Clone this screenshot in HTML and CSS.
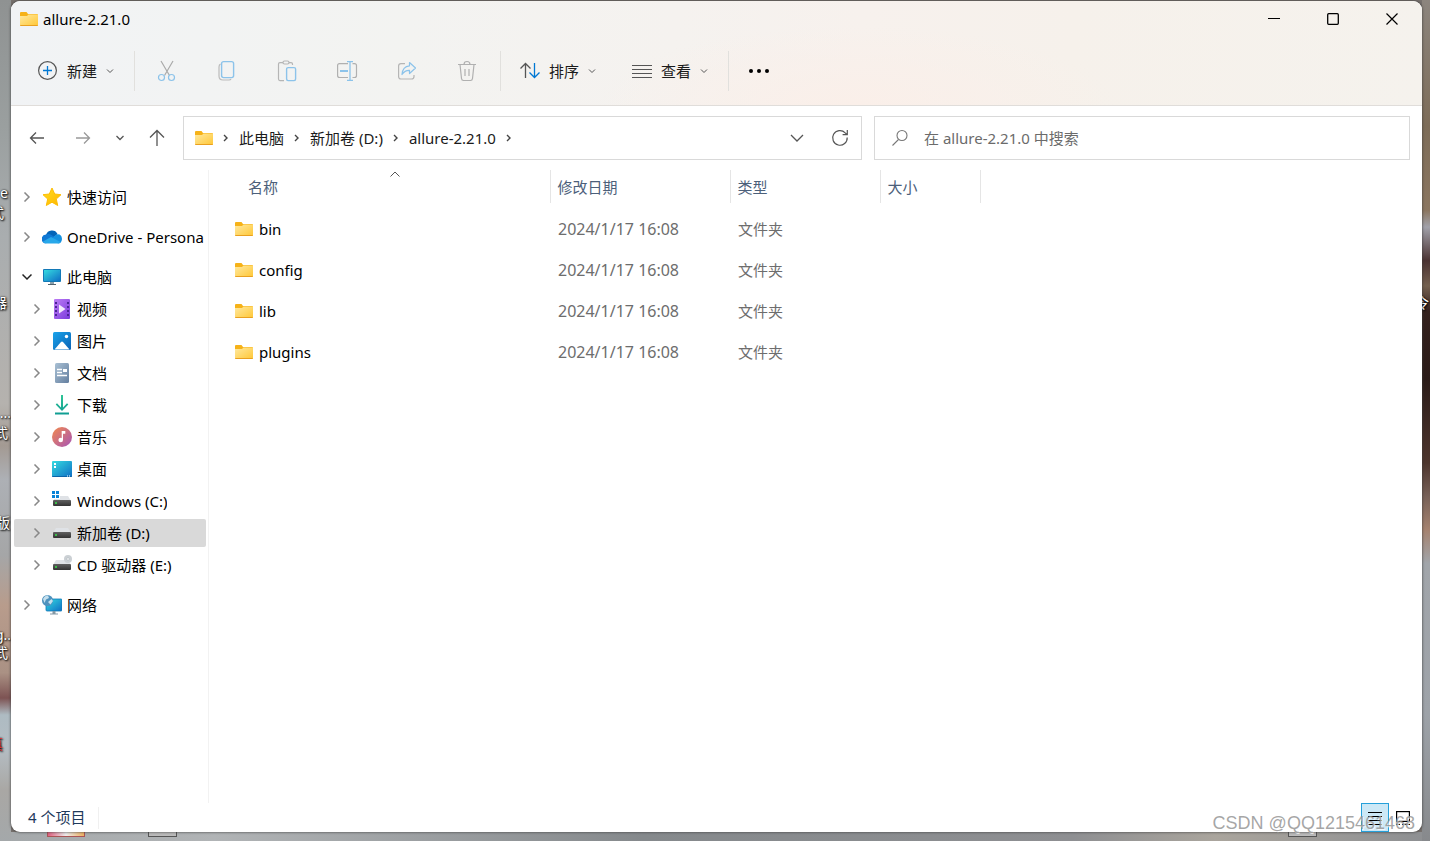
FILE: index.html
```html
<!DOCTYPE html>
<html lang="zh-CN">
<head>
<meta charset="utf-8">
<meta name="viewport" content="width=device-width, initial-scale=1">
<title>allure-2.21.0</title>
<link rel="stylesheet" href="styles.css">
</head>
<body class="desktop">
<svg class="defs" width="0" height="0" aria-hidden="true">
  <defs>
    <linearGradient id="g-folder" x1="0" y1="0" x2="1" y2="1"><stop offset="0" stop-color="#ffe9a0"/><stop offset="1" stop-color="#ffc736"/></linearGradient>
    <linearGradient id="g-screen" x1="0" y1="0" x2="1" y2="1"><stop offset="0" stop-color="#35dbe0"/><stop offset="1" stop-color="#0f6fc5"/></linearGradient>
    <linearGradient id="g-video" x1="0" y1="0" x2="1" y2="1"><stop offset="0" stop-color="#bd7cf5"/><stop offset="1" stop-color="#7a3bdc"/></linearGradient>
    <linearGradient id="g-pic" x1="0" y1="0" x2="1" y2="1"><stop offset="0" stop-color="#1aa3ea"/><stop offset="1" stop-color="#0a62b5"/></linearGradient>
    <linearGradient id="g-doc" x1="0" y1="0" x2="1" y2="1"><stop offset="0" stop-color="#a9c0d4"/><stop offset="1" stop-color="#647f9f"/></linearGradient>
    <linearGradient id="g-music" x1="0" y1="0" x2="1" y2="1"><stop offset="0" stop-color="#f3894c"/><stop offset="1" stop-color="#a655b8"/></linearGradient>
    <linearGradient id="g-star" x1="0" y1="0" x2="1" y2="1"><stop offset="0" stop-color="#ffdf1f"/><stop offset="1" stop-color="#ffb400"/></linearGradient>
    <linearGradient id="g-down" x1="0" y1="0" x2="0" y2="1"><stop offset="0" stop-color="#2fc596"/><stop offset="1" stop-color="#0f9c93"/></linearGradient>
    <linearGradient id="g-drive" x1="0" y1="0" x2="0" y2="1"><stop offset="0" stop-color="#606060"/><stop offset="1" stop-color="#333"/></linearGradient>
    <symbol id="i-folder" viewBox="0 0 18 14"><path d="M0 1a1 1 0 0 1 1-1h5.500l1.500 2h9a1 1 0 0 1 1 1v10H0z" fill="#f6b218"/><path d="M0 4h7l1.500-1.500H18V13a1 1 0 0 1-1 1H1a1 1 0 0 1-1-1z" fill="url(#g-folder)"/><path d="M0 13h18a1 1 0 0 1-1 1H1a1 1 0 0 1-1-1z" fill="#e9a020"/></symbol>
    <symbol id="i-right" viewBox="0 0 10 10"><path d="M2.500 .5 7 5 2.500 9.500" fill="none" stroke="currentColor" stroke-width="1.500"/></symbol>
    <symbol id="i-crumb" viewBox="0 0 10 10"><path d="M3 2 6 5 3 8" fill="none" stroke="currentColor" stroke-width="1.400"/></symbol>
    <symbol id="i-chev" viewBox="0 0 8 8"><path d="M1 2.500 4 5.500 7 2.500" fill="none" stroke="currentColor"/></symbol>
    <symbol id="i-down" viewBox="0 0 14 14"><path d="M1 4l6 6 6-6" fill="none" stroke="currentColor" stroke-width="1.300"/></symbol>
    <symbol id="i-drive" viewBox="0 0 20 20"><path d="M4 5h12l3 5H1z" fill="#dfe2e6"/><rect x="1" y="9" width="18" height="6" rx="1" fill="url(#g-drive)"/><circle cx="4" cy="12" r="1" fill="#37e24a"/></symbol>
  </defs>
</svg>

<div class="desk-labels" aria-hidden="true">
  <span class="desk-label l1">e</span><span class="desk-label l2">式</span><span class="desk-label l3">器</span><span class="desk-label l4">...</span><span class="desk-label l5">式</span><span class="desk-label l6">版</span><span class="desk-label l7">g..</span><span class="desk-label l8">式</span><span class="desk-label l9">真</span>
</div>
<div class="desk-labels right" aria-hidden="true"><span class="desk-label r1">令</span></div>
<span class="desk-icon d1"></span><span class="desk-icon d2"></span><span class="desk-icon d3"></span>

<main class="window">
  <header class="chrome">
    <div class="titlebar">
      <svg class="folder"><use href="#i-folder"/></svg>
      <h1 class="title">allure-2.21.0</h1>
      <div class="caption">
        <button class="cap-btn" aria-label="最小化"><svg width="12" height="12"><path d="M0 5.500h12" stroke="#000"/></svg></button>
        <button class="cap-btn" aria-label="最大化"><svg width="12" height="12"><rect x=".7" y=".7" width="10.600" height="10.600" rx="1" fill="none" stroke="#000" stroke-width="1.300"/></svg></button>
        <button class="cap-btn" aria-label="关闭"><svg width="12" height="12"><path d="M.5 .5l11 11M11.500 .5l-11 11" stroke="#000" stroke-width="1.200"/></svg></button>
      </div>
    </div>
    <div class="toolbar">
      <button class="tool"><svg width="20" height="20" fill="none"><circle cx="9.500" cy="9.500" r="8.900" stroke="#555" stroke-width="1.200"/><path d="M9.500 5v9M5 9.500h9" stroke="#0078d4" stroke-width="1.300"/></svg><span>新建</span><svg class="chev"><use href="#i-chev"/></svg></button>
      <span class="rule"></span>
      <button class="icon-tool" aria-label="剪切" disabled><svg width="20" height="22" fill="none" stroke-width="1.200"><path d="M4 1l8.500 14.500M16 1 7.500 15.500" stroke="#aaa"/><circle cx="4.500" cy="17.500" r="3" stroke="#8cc3ea"/><circle cx="14.500" cy="17.500" r="3" stroke="#8cc3ea"/></svg></button>
      <button class="icon-tool" aria-label="复制" disabled><svg width="20" height="22" fill="none" stroke-width="1.200"><path d="M3.500 4Q2 4.800 2 7v9q0 4 4 4h6q1.500 0 2-1" stroke="#bbb"/><rect x="4.600" y="1.600" width="12" height="16" rx="2" stroke="#8cc3ea" stroke-width="1.400"/></svg></button>
      <button class="icon-tool" aria-label="粘贴" disabled><svg width="20" height="22" fill="none" stroke-width="1.200"><path d="M6 2.600H3q-1.500 0-1.500 1.500v15q0 1.500 1.500 1.500h4M12 2.600h2q1.500 0 1.500 1.500V5" stroke="#b5b5b5"/><rect x="6" y="1" width="6" height="3" rx="1.500" stroke="#b5b5b5"/><rect x="9.600" y="7.600" width="9" height="13" rx="1.500" stroke="#8cc3ea" stroke-width="1.400"/></svg></button>
      <button class="icon-tool" aria-label="重命名" disabled><svg width="22" height="22" fill="none" stroke-width="1.200"><path d="M12 3.600H3.500Q1.600 3.600 1.600 5.500v10q0 2 1.900 2H12M16.500 3.600h2q2 0 2 1.900v10q0 2-2 2h-2" stroke="#b0b0b0"/><path d="M11 1.600h6M11 20.400h6M14 1.600v18.800" stroke="#8cc3ea" stroke-width="1.300"/><path d="M4 11h8" stroke="#8cc3ea" stroke-width="2"/></svg></button>
      <button class="icon-tool" aria-label="共享" disabled><svg width="20" height="20" fill="none" stroke-width="1.200"><path d="M8 2.600H4Q1.600 2.600 1.600 5v10.500q0 2.500 2.400 2.500h10.500q2.500 0 2.500-2.500V14" stroke="#b5b5b5"/><path d="M12.500 1.500l6 5.500-6 5.500V9.300Q8 9 5 13.500 5.500 5.500 12.500 4.800z" stroke="#8cc3ea" stroke-linejoin="round"/></svg></button>
      <button class="icon-tool" aria-label="删除" disabled><svg width="20" height="22" fill="none" stroke="#b0b0b0" stroke-width="1.200"><path d="M1 4.500h18M7 4.500q0-3 3-3t3 3M3 4.500l1.500 14q.2 2 2 2h7q1.800 0 2-2L17 4.500M8 9v7M12 9v7"/></svg></button>
      <span class="rule"></span>
      <div class="tool-pair">
        <button class="tool"><svg width="20" height="20" fill="none" stroke-width="1.300"><path d="M5.500 17V2.500M.5 7.500l5-5 5 5" stroke="#555"/><path d="M14.500 2v14.500M9.500 11.500l5 5 5-5" stroke="#0078d4"/></svg><span>排序</span><svg class="chev"><use href="#i-chev"/></svg></button>
        <button class="tool"><svg width="20" height="20" fill="none" stroke="#555" stroke-width="1.100"><path d="M0 4.500h20M0 8.500h20M0 12.500h20M0 16.500h20"/></svg><span>查看</span><svg class="chev"><use href="#i-chev"/></svg></button>
      </div>
      <span class="rule"></span>
      <button class="icon-tool more" aria-label="查看更多"><svg width="22" height="20"><circle cx="3" cy="10" r="2"/><circle cx="11" cy="10" r="2"/><circle cx="19" cy="10" r="2"/></svg></button>
    </div>
  </header>

  <div class="navbar">
    <div class="nav-buttons">
      <button class="nav-btn wide" aria-label="后退"><svg width="16" height="14" fill="none" stroke="#555" stroke-width="1.300"><path d="M15 7H1.500M7 1.500 1.500 7 7 12.500"/></svg></button>
      <button class="nav-btn wide" aria-label="前进"><svg width="16" height="14" fill="none" stroke="#999" stroke-width="1.300"><path d="M1 7h13.500M9 1.500 14.500 7 9 12.500"/></svg></button>
      <button class="nav-btn narrow" aria-label="最近浏览的位置"><svg width="8" height="8" fill="none" stroke="#555" stroke-width="1.300"><path d="M.5 2 4 5.500 7.500 2"/></svg></button>
      <button class="nav-btn wide" aria-label="上移"><svg width="16" height="18" fill="none" stroke="#555" stroke-width="1.300"><path d="M8 17V1.500M1 8.500l7-7 7 7"/></svg></button>
    </div>
    <div class="fields">
      <div class="address">
        <svg class="folder"><use href="#i-folder"/></svg>
        <svg class="crumb-sep"><use href="#i-crumb"/></svg><a class="crumb" href="#">此电脑</a>
        <svg class="crumb-sep"><use href="#i-crumb"/></svg><a class="crumb" href="#">新加卷 (D:)</a>
        <svg class="crumb-sep"><use href="#i-crumb"/></svg><a class="crumb" href="#">allure-2.21.0</a>
        <svg class="crumb-sep"><use href="#i-crumb"/></svg>
        <div class="address-actions">
          <button class="nav-btn" aria-label="以前的位置"><svg width="14" height="14" class="grey"><use href="#i-down"/></svg></button>
          <button class="nav-btn" aria-label="刷新"><svg width="18" height="18" fill="none" stroke="#555" stroke-width="1.200"><path d="M16.200 8.500a7.300 7.300 0 1 1-2-4.600L16 5.500M16.300 1v4.700h-4.700"/></svg></button>
        </div>
      </div>
      <label class="search">
        <svg width="18" height="18" fill="none" stroke="#777" stroke-width="1.100"><circle cx="11" cy="6.500" r="5"/><path d="M7.500 10.500 1.500 16.500"/></svg>
        <input class="search-input" type="text" aria-label="搜索" placeholder="在 allure-2.21.0 中搜索">
      </label>
    </div>
  </div>

  <div class="content">
    <nav class="tree" aria-label="导航窗格">
      <a class="node" href="#"><svg class="arrow"><use href="#i-right"/></svg><svg class="ico" viewBox="0 0 20 20"><path d="M10 1l2.700 6 6.300.7-4.700 4.300 1.400 6.500L10 15.200 4.300 18.500 5.700 12 1 7.700 7.300 7z" fill="url(#g-star)" stroke="#fdbd06" stroke-linejoin="round"/></svg><span class="name">快速访问</span></a>
      <a class="node group" href="#"><svg class="arrow"><use href="#i-right"/></svg><svg class="ico" viewBox="0 0 20 20"><path d="M4 8A6.200 6.200 0 0 1 15.500 7L10 12z" fill="#0364b8"/><path d="M4 7.500Q7 6.500 9.500 8l7 5L3 16.500A4.600 4.600 0 0 1 4 7.500z" fill="#0f78d4"/><path d="M10 11l4.500-3.500q5-1 5.500 4.500-.5 4.500-4 4.500z" fill="#1490df"/><path d="M1 14.500 9 10l9.500 5q-1 1.500-3 1.500H4.500q-2.500 0-3.500-2z" fill="#28a8ea"/></svg><span class="name">OneDrive - Persona</span></a>
      <a class="node group open" href="#"><svg class="arrow"><use href="#i-right"/></svg><svg class="ico" viewBox="0 0 20 20"><rect x="1" y="2" width="18" height="13" rx="1" fill="#1379b7"/><rect x="2" y="3" width="16" height="11" fill="url(#g-screen)"/><path d="M8 15h4v2H8z" fill="#8aa0ad"/><path d="M6 17h8v1H6z" fill="#52636e"/></svg><span class="name">此电脑</span></a>
      <a class="node sub" href="#"><svg class="arrow"><use href="#i-right"/></svg><svg class="ico" viewBox="0 0 20 20"><rect x="2" width="16" height="20" rx="1" fill="url(#g-video)"/><path d="M3 3h2v2H3zM3 7h2v2H3zM3 11h2v2H3zM3 15h2v2H3zM15 3h2v2h-2zM15 7h2v2h-2zM15 11h2v2h-2zM15 15h2v2h-2z" fill="#4b2596"/><path d="M7 5.500 13.500 10 7 14.500z" fill="#f3eafc"/></svg><span class="name">视频</span></a>
      <a class="node sub" href="#"><svg class="arrow"><use href="#i-right"/></svg><svg class="ico" viewBox="0 0 20 20"><rect x="1" y="1" width="18" height="18" rx="1.500" fill="url(#g-pic)"/><path d="M2.500 18.500 9 11q1-1 2 0l6.500 7.500z" fill="#fff"/><circle cx="14.500" cy="5.500" r="1.700" fill="#fff"/></svg><span class="name">图片</span></a>
      <a class="node sub" href="#"><svg class="arrow"><use href="#i-right"/></svg><svg class="ico" viewBox="0 0 20 20"><rect x="3" width="14" height="20" rx="1.500" fill="url(#g-doc)"/><path d="M5 6.500h5M5 9.500h5M5 12.500h10" stroke="#fff" stroke-width="1.300"/><path d="M11 6h4v3h-4z" fill="#fff"/></svg><span class="name">文档</span></a>
      <a class="node sub" href="#"><svg class="arrow"><use href="#i-right"/></svg><svg class="ico" viewBox="0 0 20 20" fill="none"><path d="M9 0h2v12.500L15 8.300l1.300 1.300L10 16 3.700 9.600 5 8.300l4 4.200zM3 17.500h14v2H3z" fill="url(#g-down)"/></svg><span class="name">下载</span></a>
      <a class="node sub" href="#"><svg class="arrow"><use href="#i-right"/></svg><svg class="ico" viewBox="0 0 20 20"><circle cx="10" cy="10" r="10" fill="url(#g-music)"/><circle cx="8.700" cy="13" r="2.300" fill="#fff"/><path d="M9.700 4h3.600v2.700H11V13H9.700z" fill="#fff"/></svg><span class="name">音乐</span></a>
      <a class="node sub" href="#"><svg class="arrow"><use href="#i-right"/></svg><svg class="ico" viewBox="0 0 20 20"><rect y="2" width="20" height="16" rx="1" fill="url(#g-screen)"/><path d="M2 4h2v2H2zM2 7h2v2H2z" fill="#fff"/><path d="M0 17h20a1 1 0 0 1-1 1H1a1 1 0 0 1-1-1z" fill="#0c64a8"/><path d="M15 16.500h1v1h-1zM17 16.500h1v1h-1z" fill="#fff"/></svg><span class="name">桌面</span></a>
      <a class="node sub" href="#"><svg class="arrow"><use href="#i-right"/></svg><svg class="ico" viewBox="0 0 20 20"><use href="#i-drive" width="20" height="20"/><path d="M0 0h8v8H0z" fill="#fff"/><path d="M0 0h3v3H0zM4 0h3v3H4zM0 4h3v3H0zM4 4h3v3H4z" fill="#0a84d8"/></svg><span class="name">Windows (C:)</span></a>
      <a class="node sub selected" href="#"><svg class="arrow"><use href="#i-right"/></svg><svg class="ico" viewBox="0 0 20 20"><use href="#i-drive" width="20" height="20"/></svg><span class="name">新加卷 (D:)</span></a>
      <a class="node sub" href="#"><svg class="arrow"><use href="#i-right"/></svg><svg class="ico" viewBox="0 0 20 20"><use href="#i-drive" width="20" height="20"/><circle cx="16" cy="4" r="4" fill="#cbd0d4"/><circle cx="16" cy="4" r="1.300" fill="#fff" stroke="#aab2b8" stroke-width=".6"/></svg><span class="name">CD 驱动器 (E:)</span></a>
      <a class="node group" href="#"><svg class="arrow"><use href="#i-right"/></svg><svg class="ico" viewBox="0 0 20 20"><rect x="4" y="4" width="16" height="12" rx="1" fill="url(#g-screen)" stroke="#1379b7" stroke-width=".8"/><path d="M10.500 16h3v2.500h-3zM8 18.500h8v1H8z" fill="#8398a5"/><circle cx="5.500" cy="5.500" r="5.500" fill="#4f92bd"/><path d="M1 4q2-4 5-3.500L7 3 4 4.500 2.500 8zM6 7l3.500-3L11 6 8.500 9.500z" fill="#c5e0ee"/></svg><span class="name">网络</span></a>
    </nav>
    <section class="files">
      <table class="list">
        <colgroup><col class="c-name"><col class="c-date"><col class="c-type"><col class="c-size"></colgroup>
        <thead><tr><th class="sorted">名称<svg class="sort" width="10" height="6" fill="none" stroke="#555"><path d="M.5 5.500 5 1l4.500 4.500"/></svg></th><th>修改日期</th><th>类型</th><th>大小</th></tr></thead>
        <tbody>
          <tr><td><span class="file"><svg class="folder"><use href="#i-folder"/></svg>bin</span></td><td class="date">2024/1/17 16:08</td><td>文件夹</td><td></td></tr>
          <tr><td><span class="file"><svg class="folder"><use href="#i-folder"/></svg>config</span></td><td class="date">2024/1/17 16:08</td><td>文件夹</td><td></td></tr>
          <tr><td><span class="file"><svg class="folder"><use href="#i-folder"/></svg>lib</span></td><td class="date">2024/1/17 16:08</td><td>文件夹</td><td></td></tr>
          <tr><td><span class="file"><svg class="folder"><use href="#i-folder"/></svg>plugins</span></td><td class="date">2024/1/17 16:08</td><td>文件夹</td><td></td></tr>
        </tbody>
      </table>
    </section>
  </div>

  <footer class="status">
    <span class="count">4 个项目</span>
    <div class="views">
      <button class="view on" aria-label="详细信息"><svg width="14" height="14" stroke="#000" stroke-width="1"><path d="M0 1.500h14M0 5.500h14M0 9.500h14M0 13.500h14"/></svg></button>
      <button class="view" aria-label="大图标"><svg width="14" height="14" fill="none" stroke="#000" stroke-width="1.200"><rect x=".6" y=".6" width="12.800" height="9.800"/><path d="M0 13.400h4M6 13.400h8"/></svg></button>
    </div>
  </footer>
</main>
<span class="watermark">CSDN @QQ1215461468</span>
</body>
</html>
```
FILE: styles.css
```css
* { box-sizing: border-box; }
html, body { height: 100%; }
.desktop {
  margin: 0;
  padding: 1px 8px 9px 11px;
  position: relative;
  overflow: hidden;
  font: 15px/20px "Noto Sans", "Noto Sans CJK SC", sans-serif;
  color: #000;
  background:
    linear-gradient(#8f9292, #9a9f9f 15%, #a9adaf 28%, #b5b2ae 48%, #a39a93 53%, #adb0b5 57%, #a5a6a7 66%, #b89c8c 72%, #aa9184 80%, #7d5353 83%, #aebbc2 85%, #b4bdc3 89%, #a9a7a4 94%, #a4a8aa) left / 11px 100% no-repeat,
    linear-gradient(#8c857e, #7d6c58 15%, #8b7660 25%, #a1a1aa 27%, #4a3232 31%, #74604f 34%, #35211d 37%, #2b1b18 45%, #4d352d 55%, #776057 59%, #a5826f 63%, #a1a5aa 67%, #9da2a8 85%, #87898c) right / 8px 100% no-repeat,
    linear-gradient(90deg, #a4a8aa, #b1b4b6 15%, #85898c 45%, #8e8f92 75%, #aaa59d 85%, #8d8f92) bottom / 100% 9px no-repeat,
    #77716d;
}
.defs { position: absolute; }
button { font: inherit; color: inherit; background: none; border: 0; padding: 0; display: flex; align-items: center; justify-content: center; }
a { color: inherit; text-decoration: none; }
svg { flex: none; }

.desk-labels { position: absolute; left: 0; top: 0; width: 11px; height: 100%; overflow: hidden; color: #fff; font-size: 14px; text-shadow: 1px 1px 2px #000, 0 0 2px #000; }
.desk-labels.right { left: auto; right: 0; width: 8px; }
.desk-label { position: absolute; right: 3px; white-space: nowrap; }
.l1 { top: 183px; }
.l2 { top: 203px; right: 7px; }
.l3 { top: 293px; right: 4px; }
.l4 { top: 403px; right: 0; }
.l5 { top: 423px; }
.l6 { top: 513px; right: 1px; }
.l7 { top: 625px; right: 0; }
.l8 { top: 643px; }
.l9 { top: 734px; right: 8px; color: #d33; }
.r1 { top: 293px; right: 1px; }
.desk-icon { position: absolute; bottom: 4px; height: 6px; width: 29px; border: 1px solid #555; background: #bbb; }
.d1 { left: 47px; width: 38px; border-color: #a55; background: linear-gradient(90deg, #e06080, #eee, #eeb060); }
.d2 { left: 148px; }
.d3 { right: 113px; }

.window { position: relative; height: 100%; display: flex; flex-direction: column; background: #fff; border-radius: 9px; overflow: hidden; box-shadow: 0 0 2px 1px rgba(60, 60, 60, .5); }
.chrome {
  border-bottom: 1px solid #e0ddda;
  background:
    radial-gradient(ellipse 260px 80px at 60% 100%, #faefe9, transparent),
    linear-gradient(95deg, #f1f3f5, #f3f3f1 28%, #f5f2ef 47%, #f7f1ed 60%, #f6f1eb 75%, #f5f2ed);
}
.titlebar { display: flex; align-items: center; height: 36px; padding: 0 1px 0 9px; }
.title { margin: 0 0 0 5px; font-size: 15px; font-weight: 400; }
.folder { width: 18px; height: 14px; }
.caption { margin-left: auto; display: flex; align-self: stretch; }
.cap-btn { width: 59px; }
.toolbar { display: flex; align-items: center; height: 68px; padding-left: 17px; color: #1b1b1b; }
.tool { gap: 9px; height: 40px; padding: 0 17px 0 10px; }
.tool-pair { display: flex; gap: 9px; padding-left: 7px; }
.chev { width: 8px; height: 8px; color: #555; }
.rule { width: 1px; height: 40px; margin: 0 2px 0 3px; background: #e1e0dd; }
.icon-tool { width: 60px; height: 40px; }
.icon-tool.more { width: 56px; }

.navbar { display: flex; align-items: center; padding: 10px 12px 10px 3px; }
.nav-buttons { display: flex; width: 169px; }
.nav-btn { width: 43px; height: 42px; }
.nav-btn.wide { width: 46px; }
.nav-btn.narrow { width: 28px; }
.grey { color: #555; }
.fields { flex: 1; display: grid; grid-template-columns: 679fr 536fr; gap: 12px; }
.address { display: flex; align-items: center; height: 44px; padding-left: 11px; border: 1px solid #d9d9d9; }
.crumb { color: #1b1b1b; white-space: nowrap; }
.crumb-sep { width: 10px; height: 10px; margin: 0 8px; color: #444; }
.address-actions { display: flex; margin-left: auto; }
.search { display: flex; align-items: center; gap: 15px; height: 44px; padding: 0 16px; border: 1px solid #d9d9d9; }
.search-input { flex: 1; min-width: 0; padding: 0; border: 0; outline: 0; background: none; font: inherit; }
.search-input::placeholder { color: #6b6b6b; opacity: 1; }

.content { flex: 1; display: flex; min-height: 0; }
.tree { width: 198px; padding: 13px 2px 0 3px; border-right: 1px solid #f2f2f2; overflow: hidden; }
.node { display: flex; align-items: center; height: 28px; margin-bottom: 4px; padding-left: 8px; border-radius: 2px; }
.node.group { margin-top: 12px; }
.node.sub { padding-left: 18px; }
.node.selected { background: #d9d9d9; }
.arrow { width: 10px; height: 10px; margin-right: 10px; color: #888; }
.open .arrow { transform: rotate(90deg); color: #222; }
.ico { width: 20px; height: 20px; margin-right: 5px; }
.name { white-space: nowrap; overflow: hidden; }

.files { flex: 1; overflow: hidden; }
.list { table-layout: fixed; width: 771px; border-collapse: collapse; text-align: left; }
.c-name { width: 341px; }
.c-date { width: 180px; }
.c-type { width: 150px; }
.c-size { width: 100px; }
.list th { height: 33px; padding: 0 7px; font-weight: 400; color: #4c607a; border-right: 1px solid #e5e5e5; }
.list th.sorted { position: relative; padding-left: 39px; }
.sort { position: absolute; left: 181px; top: 1px; }
.list td { height: 41px; padding: 0 8px; color: #6d6d6d; }
.list td:first-child { padding-left: 26px; color: #000; }
.list td.date { font-size: 16px; }
.list tbody::before { content: ""; display: block; height: 5px; }
.file { display: flex; align-items: center; gap: 6px; }

.status { display: flex; align-items: center; height: 29px; padding: 0 5px 0 17px; color: #1e395b; }
.count { padding: 0 13px 2px 0; border-right: 1px solid #f0f0f0; }
.views { display: flex; align-self: stretch; margin-left: auto; }
.view { width: 28px; }
.view.on { background: #cce8f6; border: 1px solid #26a0da; }
.watermark { position: absolute; right: 15px; bottom: 8px; font: 18px/20px "Liberation Sans", sans-serif; color: rgba(150, 150, 150, .85); text-shadow: 1px 1px 0 rgba(255, 255, 255, .7); }
```
